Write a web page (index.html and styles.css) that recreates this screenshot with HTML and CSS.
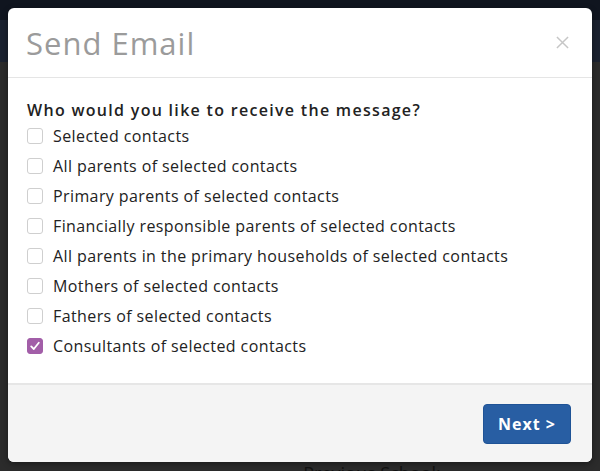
FILE: index.html
```html
<!DOCTYPE html>
<html>
<head>
<meta charset="utf-8">
<link rel="stylesheet" href="styles.css">
</head>
<body>
<div class="page">
  <div class="topbar"></div>
  <div class="subbar"></div>
  <div class="content">
    <div class="bg-label">Previous School:</div>
  </div>
</div>
<div class="modal">
  <div class="modal-header">
    <h2 class="modal-title">Send Email</h2>
    <svg class="close" viewBox="0 0 14 14" width="14" height="14"><path d="M1 1 L13 13 M13 1 L1 13" stroke="#c6c6c6" stroke-width="1.6" fill="none"/></svg>
  </div>
  <div class="modal-body">
    <p class="question">Who would you like to receive the message?</p>
    <label class="opt"><span class="box"></span>Selected contacts</label>
    <label class="opt"><span class="box"></span>All parents of selected contacts</label>
    <label class="opt"><span class="box"></span>Primary parents of selected contacts</label>
    <label class="opt"><span class="box"></span>Financially responsible parents of selected contacts</label>
    <label class="opt"><span class="box"></span>All parents in the primary households of selected contacts</label>
    <label class="opt"><span class="box"></span>Mothers of selected contacts</label>
    <label class="opt"><span class="box"></span>Fathers of selected contacts</label>
    <label class="opt"><span class="box checked"><svg viewBox="0 0 14 14" width="14" height="14"><path d="M3.2 7.4 L5.8 10 L10.8 3.8" fill="none" stroke="#fff" stroke-width="1.8" stroke-linecap="round" stroke-linejoin="round"/></svg></span>Consultants of selected contacts</label>
  </div>
  <div class="modal-footer">
    <button class="btn-next">Next &gt;</button>
  </div>
</div>
</body>
</html>
```
FILE: styles.css
```css
html, body {
  margin: 0;
  padding: 0;
  width: 600px;
  height: 471px;
  overflow: hidden;
  background: #2b2b2b;
  font-family: "Open Sans", "Liberation Sans", sans-serif;
}
.page {
  display: flex;
  flex-direction: column;
  height: 471px;
}
.topbar {
  height: 20px;
  background: #10151f;
}
.subbar {
  height: 42px;
  background: #1b2230;
}
.content {
  flex: 1;
  display: flex;
  align-items: flex-end;
  justify-content: center;
}
.bg-label {
  color: #111;
  font-size: 18px;
  line-height: 22px;
  margin-bottom: -13px;
  margin-left: 144px;
}
.modal {
  position: absolute;
  left: 8px;
  top: 8px;
  width: 584px;
  height: 454px;
  background: #fff;
  border-radius: 6px;
  display: flex;
  flex-direction: column;
  overflow: hidden;
  box-shadow: 0 2px 6px rgba(0,0,0,0.4);
}
.modal-header {
  height: 70px;
  border-bottom: 1px solid #e5e5e5;
  display: flex;
  align-items: center;
  justify-content: space-between;
  padding: 0 23px 0 18px;
  box-sizing: border-box;
}
.modal-title {
  margin: 0;
  font-size: 31px;
  font-weight: 400;
  color: #9b9b9b;
  letter-spacing: 1px;
}
.close {
  display: block;
  width: 13px;
  height: 13px;
}
.modal-body {
  flex: 1;
  padding: 21px 19px 0 19px;
}
.question {
  margin: 0;
  font-size: 16px;
  font-weight: 600;
  color: #222;
  letter-spacing: 1.3px;
  line-height: 22px;
}
.opt {
  display: flex;
  align-items: center;
  height: 30px;
  font-size: 16px;
  letter-spacing: 0.4px;
  color: #222;
}
.box {
  width: 14px;
  height: 14px;
  border: 1px solid #cfcfcf;
  border-radius: 3px;
  margin-right: 10px;
  box-sizing: content-box;
  display: flex;
  align-items: center;
  justify-content: center;
}
.box.checked {
  background: #a25ea8;
  border-color: #a25ea8;
}
.modal-footer {
  height: 79px;
  background: #f4f4f4;
  border-top: 2px solid #e6e6e6;
  display: flex;
  align-items: center;
  justify-content: flex-end;
  padding: 0 21px 0 0;
  box-sizing: border-box;
}
.btn-next {
  width: 88px;
  height: 40px;
  background: #285ea3;
  border: 1px solid #1f5396;
  border-radius: 4px;
  color: #fff;
  font-family: "Open Sans", "Liberation Sans", sans-serif;
  font-size: 16px;
  font-weight: 700;
  letter-spacing: 1px;
}
```
